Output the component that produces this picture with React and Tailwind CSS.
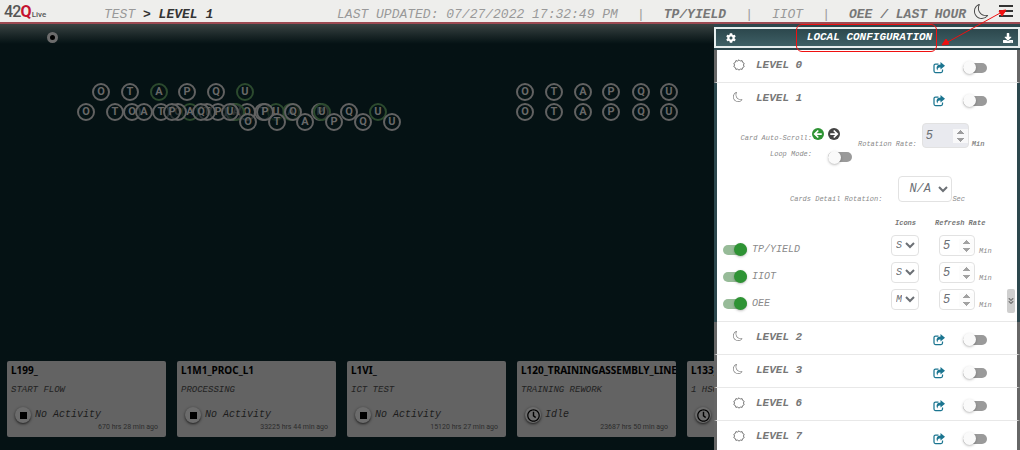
import React from 'react';
import { FaCog, FaDownload, FaRegClock, FaAngleDoubleDown } from 'react-icons/fa';
import { BsMoon } from 'react-icons/bs';

const LETTERS = ['O', 'T', 'A', 'P', 'Q', 'U'];

// every line is a row of six station pins; `green` holds the healthy ones
const LINES = [
  { y: 92, xs: [101, 130, 159, 187, 216, 245], green: [2, 5] },
  { y: 112, xs: [234, 263, 291, 320, 349, 378], green: [2, 5] },
  { y: 112, xs: [132, 161, 190, 218, 247, 276], green: [2, 5] },
  { y: 112, xs: [178, 207, 236, 265, 293, 322], green: [2, 5] },
  { y: 112, xs: [86, 115, 144, 172, 201, 230], green: [] },
  { y: 122, xs: [248, 277, 305, 334, 363, 392], green: [] },
  { y: 92, xs: [525, 554, 583, 611, 641, 669], green: [] },
  { y: 112, xs: [525, 554, 583, 611, 641, 669], green: [] },
];

const CARDS = [
  { title: 'L199_', step: 'START FLOW', status: 'No Activity', ago: '670 hrs 28 min ago' },
  { title: 'L1M1_PROC_L1', step: 'PROCESSING', status: 'No Activity', ago: '33225 hrs 44 min ago' },
  { title: 'L1VI_', step: 'ICT TEST', status: 'No Activity', ago: '15120 hrs 27 min ago' },
  { title: 'L120_TRAININGASSEMBLY_LINE', step: 'TRAINING REWORK', status: 'Idle', ago: '23687 hrs 50 min ago' },
  { title: 'L133_', step: '1 HSG', status: 'Idle', ago: '' },
];

const METRICS = [
  { name: 'TP/YIELD', size: 'S' },
  { name: 'IIOT', size: 'S' },
  { name: 'OEE', size: 'M' },
];

const SunIcon = () => (
  <svg width="12" height="12" viewBox="0 0 24 24" fill="none" stroke="currentColor" strokeWidth="2" strokeLinejoin="round">
    <path d="M12 1.5l2.6 2.6 3.6-.9 1 3.5 3.2 1.9-1.5 3.4 1.5 3.4-3.2 1.9-1 3.5-3.6-.9L12 22.5l-2.6-2.6-3.6.9-1-3.5-3.2-1.9L3.100 12 1.600 8.600l3.200-1.900 1-3.500 3.600.9z" />
  </svg>
);

const ShareIcon = () => (
  <svg width="12" height="12" viewBox="0 0 24 24" fill="none" stroke="currentColor" strokeWidth="2.5">
    <path d="M11 4H5a3 3 0 0 0-3 3v11a3 3 0 0 0 3 3h11a3 3 0 0 0 3-3v-3" />
    <path d="M15 0l9 7.500L15 15v-4c-4 0-6 1-6 6-4-6-1-12 6-12z" fill="currentColor" stroke="none" />
  </svg>
);

const ArrowIcon = ({ right }) => (
  <svg width="12" height="12" viewBox="0 0 24 24" fill="none" stroke="white" strokeWidth="3.5">
    <circle cx="12" cy="12" r="12" fill="currentColor" stroke="none" />
    {right ? <path d="M4.500 12h13M11.500 5l7 7-7 7" /> : <path d="M19.500 12h-13M12.500 5l-7 7 7 7" />}
  </svg>
);

const Toggle = ({ label, id, on }) => (
  <input
    type="checkbox"
    role="switch"
    id={id}
    aria-label={label}
    defaultChecked={on}
    className="appearance-none shrink-0 w-6 h-[10px] rounded-full bg-[#9a9a9a] flex items-center checked:justify-end checked:bg-[#97bb98] before:content-[''] before:w-[13px] before:h-[13px] before:shrink-0 before:rounded-full before:bg-[#fafafa] before:shadow before:shadow-black/20 checked:before:bg-[#2e9334]"
  />
);

const RateInput = ({ label, className, disabled }) => (
  <input
    type="number"
    aria-label={label}
    defaultValue={5}
    disabled={disabled}
    className={`border border-[#e2e2e2] rounded-sm pl-[3px] text-[12px] italic text-[#6c7075] [&::-webkit-inner-spin-button]:opacity-80 ${className}`}
  />
);

const LevelHeader = ({ level, dark }) => (
  <div className="flex items-start h-8 pl-4 pr-[30px] pt-[7px]">
    <span className="w-3 mr-[11px] pt-[2px] text-[#777]">
      {dark ? <BsMoon size={10} /> : <SunIcon />}
    </span>
    <h3 className="flex-1 text-[11px] leading-4 font-bold italic text-[#777]">LEVEL {level}</h3>
    <div className="flex items-center gap-[18px] h-[21px]">
      <button aria-label={`Share level ${level}`} className="text-[#1b7590]"><ShareIcon /></button>
      <Toggle label={`Level ${level}`} />
    </div>
  </div>
);

const LevelRow = ({ level, dark }) => (
  <section className="border-x-[3px] border-x-[#666] bg-white border-b border-b-[#e8e8e8]">
    <LevelHeader level={level} dark={dark} />
  </section>
);

const LevelDetails = () => (
  <div className="text-[7px] italic text-[#8a8a8a]">
    <div className="flex items-start h-[55px] pt-[6px] pl-5">
      <div className="w-[75px] text-right leading-4 pt-[9px]">
        <div>Card Auto-Scroll:</div>
        <label htmlFor="loop" className="block">Loop Mode:</label>
      </div>
      <div className="w-[46px]">
        <div className="flex gap-1 pt-[7px]">
          <button aria-label="Scroll left" className="text-[#2e9334]"><ArrowIcon /></button>
          <button aria-label="Scroll right" className="text-[#444]"><ArrowIcon right /></button>
        </div>
        <div className="flex pt-3 pl-4"><Toggle id="loop" label="Loop Mode" /></div>
      </div>
      <span className="pt-[18px]">Rotation Rate:</span>
      <RateInput label="Rotation Rate" disabled className="w-[47px] h-[25px] ml-[5px] mt-[2px] bg-[#e9eaef]" />
      <span className="pt-[18px] pl-[3px] font-bold">Min</span>
    </div>
    <div className="flex items-end h-[34px] pl-[73px]">
      <label htmlFor="rotation">Cards Detail Rotation:</label>
      <select id="rotation" className="w-[54px] h-[26px] ml-4 mb-[2px] pl-[6px] bg-white border border-[#e2e2e2] rounded-sm text-[12px] italic text-[#6c7075]">
        <option>N/A</option>
      </select>
      <span>Sec</span>
    </div>
    <table className="w-full mt-2">
      <thead>
        <tr className="h-[22px] text-left text-[#777]">
          <th></th>
          <th className="w-[40px] pl-1">Icons</th>
          <th colSpan={2} className="pl-1">Refresh Rate</th>
        </tr>
      </thead>
      <tbody>
        {METRICS.map(({ name, size }) => (
          <tr key={name} className="h-[27px]">
            <td className="pl-[6px] pt-1">
              <label className="flex items-center gap-[5px] text-[10px]">
                <Toggle label={name} on />
                {name}
              </label>
            </td>
            <td className="pb-1">
              <select aria-label={`${name} icon size`} defaultValue={size} className="block w-7 h-[21px] bg-white border border-[#e2e2e2] rounded-sm text-[10px] italic text-[#6c7075]">
                <option>S</option>
                <option>M</option>
              </select>
            </td>
            <td className="w-[40px] pl-2 pb-1"><RateInput label={`${name} refresh rate`} className="block w-9 h-[21px] bg-white" /></td>
            <td className="w-[42px] pl-1 pt-2">Min</td>
          </tr>
        ))}
      </tbody>
    </table>
  </div>
);

const StationPins = () => (
  <div className="absolute inset-0 font-['Roboto',sans-serif]">
    <span className="absolute left-[47px] top-[32px] w-[11px] h-[11px] rounded-full bg-black border-[3px] border-[#6c6c6c]"></span>
    {LINES.map((line, row) =>
      line.xs.map((x, i) => (
        <span
          key={`${row}-${i}`}
          style={{ left: x - 9, top: line.y - 9 }}
          className={`absolute w-[18px] h-[18px] rounded-full border-2 flex items-center justify-center text-[11px] font-bold text-[#686868] bg-[#051214]/60 ${line.green.includes(i) ? 'border-[#2c4a2e]' : 'border-[#626262]'}`}
        >
          {LETTERS[i]}
        </span>
      ))
    )}
  </div>
);

const StationCard = ({ title, step, status, ago }) => (
  <article className="shrink-0 w-[159px] h-[76px] rounded-xs bg-[#636363] pl-1 overflow-hidden text-black">
    <h2 className="text-[10px] leading-[18px] font-bold font-['Noto_Sans',sans-serif] whitespace-nowrap">{title}</h2>
    <p className="mt-[3px] text-[9px] leading-4 italic text-[#222]">{step}</p>
    <div className="flex items-center mt-[9px] pl-1">
      <span className="w-4 h-4 rounded-full bg-[#6c6c6c] shadow shadow-black/60 flex items-center justify-center">
        {status === 'Idle' ? <FaRegClock size={13} /> : <span className="w-[7px] h-[7px] bg-black"></span>}
      </span>
      <span className="pl-1 text-[10px] leading-4 italic text-[#1c1c1c]">{status}</span>
    </div>
    <p className="pr-2 text-right text-[7px] leading-[8px] text-[#2c2c2c] font-['Roboto',sans-serif]">{ago}</p>
  </article>
);

const TopBar = () => (
  <header className="flex items-center h-6 pl-1 pr-[7px] bg-[#eeeeec] border-b-2 border-[#9c4a52] text-[13px] leading-4 italic text-[#999] whitespace-nowrap">
    <a href="#" className="flex items-baseline pt-1 not-italic font-['Roboto',sans-serif] text-[#555] w-[100px]">
      <span className="text-[16px] font-medium tracking-tighter">42</span>
      <span className="text-[16px] font-bold text-[#c4122f]">Q</span>
      <span className="text-[8px] font-medium">Live</span>
    </a>
    <nav className="pt-[7px]">TEST <b className="text-[#333]">&gt; LEVEL 1</b></nav>
    <div className="flex-1 flex justify-end items-center pt-[7px] gap-[19px]">
      <span>LAST UPDATED: 07/27/2022 17:32:49 PM</span>
      <span>|</span>
      <b className="text-[#777]">TP/YIELD</b>
      <span>|</span>
      <span>IIOT</span>
      <span>|</span>
      <b className="text-[#777]">OEE / LAST HOUR</b>
    </div>
    <button aria-label="Night mode" className="ml-2 text-[#444]"><BsMoon size={15} /></button>
    <button aria-label="Menu" className="ml-[10px] w-[14px] flex flex-col gap-[3px]">
      <span className="h-[2px] w-full bg-[#333]"></span>
      <span className="h-[2px] w-full bg-[#333]"></span>
      <span className="h-[2px] w-full bg-[#333]"></span>
    </button>
  </header>
);

// red frame round the panel title, with the arrow that points to the menu button
const Callout = () => (
  <div className="absolute right-0 top-0 w-[224px] h-[52px] pointer-events-none">
    <div className="absolute left-0 bottom-0 w-[141px] h-7 border border-[#f01010] rounded-md"></div>
    <svg className="absolute right-0 top-0" width="84" height="52" viewBox="0 0 84 52" fill="#f01010" stroke="#f01010">
      <path d="M10 43L66 12" />
      <path d="M6 45l4-6 3 5zM70 10l-7 1 3 5z" />
    </svg>
  </div>
);

export default function App() {
  return (
    <div className="relative h-screen flex flex-col overflow-hidden bg-[#051214] font-['Liberation_Mono',monospace]">
      <TopBar />
      <main className="flex-1 flex flex-col justify-end bg-linear-to-b from-[#3a4443] to-[#051214] to-[20px]">
        <StationPins />
        <div className="flex gap-[11px] pl-[7px] pb-[13px]">
          {CARDS.map((card) => <StationCard key={card.title} {...card} />)}
        </div>
      </main>

      <aside className="absolute right-0 top-6 bottom-0 w-[306px] pt-[3px] bg-[#2c474d] overflow-hidden">
        <div className="flex items-center justify-between h-[21px] pl-[10px] pr-[5px] mb-[2px] border-2 border-[#e6eeee] bg-linear-to-b from-[#2c474d] to-[#3e6065] text-white">
          <button aria-label="Settings"><FaCog size={10} /></button>
          <h2 className="text-[11px] font-bold italic">LOCAL CONFIGURATION</h2>
          <button aria-label="Download"><FaDownload size={10} /></button>
        </div>
        <LevelRow level={0} />
        <section className="relative mx-[3px] bg-white border-b border-[#e8e8e8] pb-[6px]">
          <LevelHeader level={1} dark />
          <LevelDetails />
          <button aria-label="Scroll down" className="absolute right-[2px] bottom-2 w-2 h-6 rounded-xs bg-[#cfcfcf] text-[#777] flex items-center justify-center">
            <FaAngleDoubleDown size={8} />
          </button>
        </section>
        <LevelRow level={2} dark />
        <LevelRow level={3} dark />
        <LevelRow level={6} />
        <LevelRow level={7} />
      </aside>
      <Callout />
    </div>
  );
}
